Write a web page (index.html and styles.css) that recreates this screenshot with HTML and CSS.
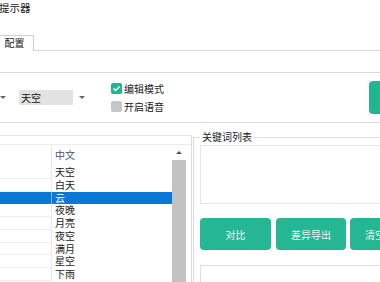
FILE: index.html
```html
<!DOCTYPE html>
<html lang="zh-CN">
<head>
  <meta charset="UTF-8" />
  <title>关键词提示器</title>
  <link rel="stylesheet" href="styles.css">
</head>
<body>

  <div class="title">提示器</div>

  <div class="tabs">
    <div class="tab">配置</div>
  </div>

  <div class="settings">
    <div class="combo combo-cut"><span class="arrow"></span></div>
    <div class="combo">
      <span class="combo-text">天空</span>
      <span class="arrow"></span>
    </div>
    <div class="checks">
      <label class="check">
        <span class="box on">
          <svg width="9" height="9" viewBox="0 0 9 9"><path d="M1.5 4.6 L3.6 6.6 L7.6 2.4" fill="none" stroke="#fff" stroke-width="1.4"/></svg>
        </span>
        编辑模式
      </label>
      <label class="check"><span class="box"></span>开启语音</label>
    </div>
    <div class="btn-go"></div>
  </div>

  <div class="work">
    <div class="word-panel">
      <div class="table">
        <div class="grid">
          <div class="row head"><div class="cell-key"></div><div class="cell-cn">中文</div></div>
          <div class="row"><div class="cell-key"></div><div class="cell-cn">天空</div></div>
          <div class="row"><div class="cell-key"></div><div class="cell-cn">白天</div></div>
          <div class="row selected"><div class="cell-key"></div><div class="cell-cn">云</div></div>
          <div class="row"><div class="cell-key"></div><div class="cell-cn">夜晚</div></div>
          <div class="row"><div class="cell-key"></div><div class="cell-cn">月亮</div></div>
          <div class="row"><div class="cell-key"></div><div class="cell-cn">夜空</div></div>
          <div class="row"><div class="cell-key"></div><div class="cell-cn">满月</div></div>
          <div class="row"><div class="cell-key"></div><div class="cell-cn">星空</div></div>
          <div class="row"><div class="cell-key"></div><div class="cell-cn">下雨</div></div>
        </div>
        <div class="scrollbar">
          <div class="scroll-up"><span></span></div>
          <div class="scroll-thumb"></div>
        </div>
      </div>
    </div>

    <fieldset class="keywords">
      <legend>关键词列表</legend>
      <div class="keyword-list"></div>
      <div class="actions">
        <button class="btn">对比</button>
        <button class="btn">差异导出</button>
        <button class="btn btn-clear">清空</button>
      </div>
      <div class="result-box"></div>
    </fieldset>
  </div>

</body>
</html>
```

FILE: styles.css
```css
* {
  margin: 0;
  padding: 0;
  box-sizing: border-box;
  font-family: "Noto Sans CJK SC", sans-serif;
}

body {
  width: 380px;
  height: 282px;
  overflow: hidden;
  background-color: #fff;
  color: #222;
  font-size: 10px;
}

.title {
  height: 35px;
  line-height: 16px;
  font-size: 10.5px;
  color: #111;
  margin-left: -1px;
}

.tabs {
  height: 16px;
  border-bottom: 1px solid #d6d6d6;
}

.tab {
  width: 35px;
  height: 16px;
  margin-left: -1px;
  border: 1px solid #cfcfcf;
  border-bottom: none;
  background-color: #fff;
  text-align: center;
  line-height: 14px;
  padding-right: 4px;
}

/* settings strip */
.settings {
  margin-top: 21px;
  height: 51px;
  border-top: 1px solid #d9d9d9;
  border-bottom: 1px solid #d9d9d9;
  display: flex;
  align-items: center;
  overflow: hidden;
}

.settings > * {
  flex-shrink: 0;
}

.combo {
  display: flex;
  align-items: center;
  height: 17px;
}

.combo-cut {
  width: 8px;
  margin-left: -1px;
  justify-content: center;
}

.combo:not(.combo-cut) {
  width: 70px;
  margin-left: 11px;
  padding: 1px;
}

.combo-text {
  width: 54px;
  height: 15px;
  background-color: #e2e2e2;
  line-height: 15px;
  padding-left: 2px;
  color: #111;
}

.arrow {
  width: 0;
  height: 0;
  margin-left: 6px;
  border-left: 3px solid transparent;
  border-right: 3px solid transparent;
  border-top: 3px solid #666;
}

.combo-cut .arrow {
  margin-left: 0;
}

.checks {
  width: 80px;
  margin-left: 23px;
  display: flex;
  flex-direction: column;
  gap: 6px;
}

.check {
  display: flex;
  align-items: center;
  height: 12px;
  line-height: 12px;
  color: #222;
}

.box {
  width: 11px;
  height: 11px;
  margin-right: 2px;
  border-radius: 2px;
  background-color: #c3c6cb;
  display: flex;
  align-items: center;
  justify-content: center;
}

.box.on {
  background-color: #22b591;
}

.btn-go {
  width: 30px;
  height: 33px;
  margin-left: 178px;
  border-radius: 4px;
  background-color: #22b591;
}

/* lower work area */
.work {
  display: flex;
  align-items: flex-start;
}

.word-panel {
  flex-shrink: 0;
  width: 192px;
  height: 160px;
  margin-top: 12px;
  border-top: 1px solid #e4e4e4;
  border-right: 1px solid #dcdcdc;
  padding-top: 8px;
  background-color: #fff;
}

.table {
  display: flex;
  border-top: 1px solid #ececec;
}

.grid {
  width: 172px;
}

.row {
  display: flex;
  height: 12.75px;
  line-height: 12.75px;
}

.row.head {
  height: 21px;
  line-height: 20px;
}

.cell-key {
  width: 52px;
  border-right: 1px solid #e6e6e6;
  border-bottom: 1px solid #eeeeee;
}

.head .cell-key {
  border-bottom: none;
}

.cell-cn {
  flex: 1;
  padding-left: 3px;
}

.head .cell-cn {
  color: #3d5677;
}

.row.selected {
  background-color: #0a78d6;
  color: #fff;
}

.row.selected .cell-key {
  border-bottom: none;
  border-right-color: #7db6e8;
}

.scrollbar {
  width: 14px;
  height: 140px;
}

.scroll-up {
  height: 15px;
  display: flex;
  align-items: center;
  justify-content: center;
}

.scroll-up span {
  width: 0;
  height: 0;
  border-left: 3px solid transparent;
  border-right: 3px solid transparent;
  border-bottom: 3px solid #555;
}

.scroll-thumb {
  height: 125px;
  background-color: #c2c2c2;
}

/* keyword group */
.keywords {
  width: 200px;
  flex-shrink: 0;
  margin-top: 8px;
  margin-left: 1px;
  border: 1px solid #dcdcdc;
  padding: 0 0 0 6px;
}

.keywords legend {
  font-size: 10px;
  line-height: 12px;
  padding: 0 2px;
  color: #222;
}

.keyword-list {
  margin-top: 2px;
  height: 59px;
  border: 1px solid #e6e6e6;
  border-right: none;
}

.actions {
  display: flex;
  gap: 5px;
  margin-top: 14px;
}

.btn {
  flex-shrink: 0;
  width: 71px;
  height: 32px;
  border: none;
  border-radius: 4px;
  background-color: #25b794;
  color: #e9f8f3;
  font-size: 10px;
}

.btn + .btn {
  width: 70px;
}

.btn.btn-clear {
  width: 50px;
  margin-left: -1px;
}

.result-box {
  margin-top: 15px;
  height: 60px;
  border: 1px solid #dedede;
  border-right: none;
}
```
